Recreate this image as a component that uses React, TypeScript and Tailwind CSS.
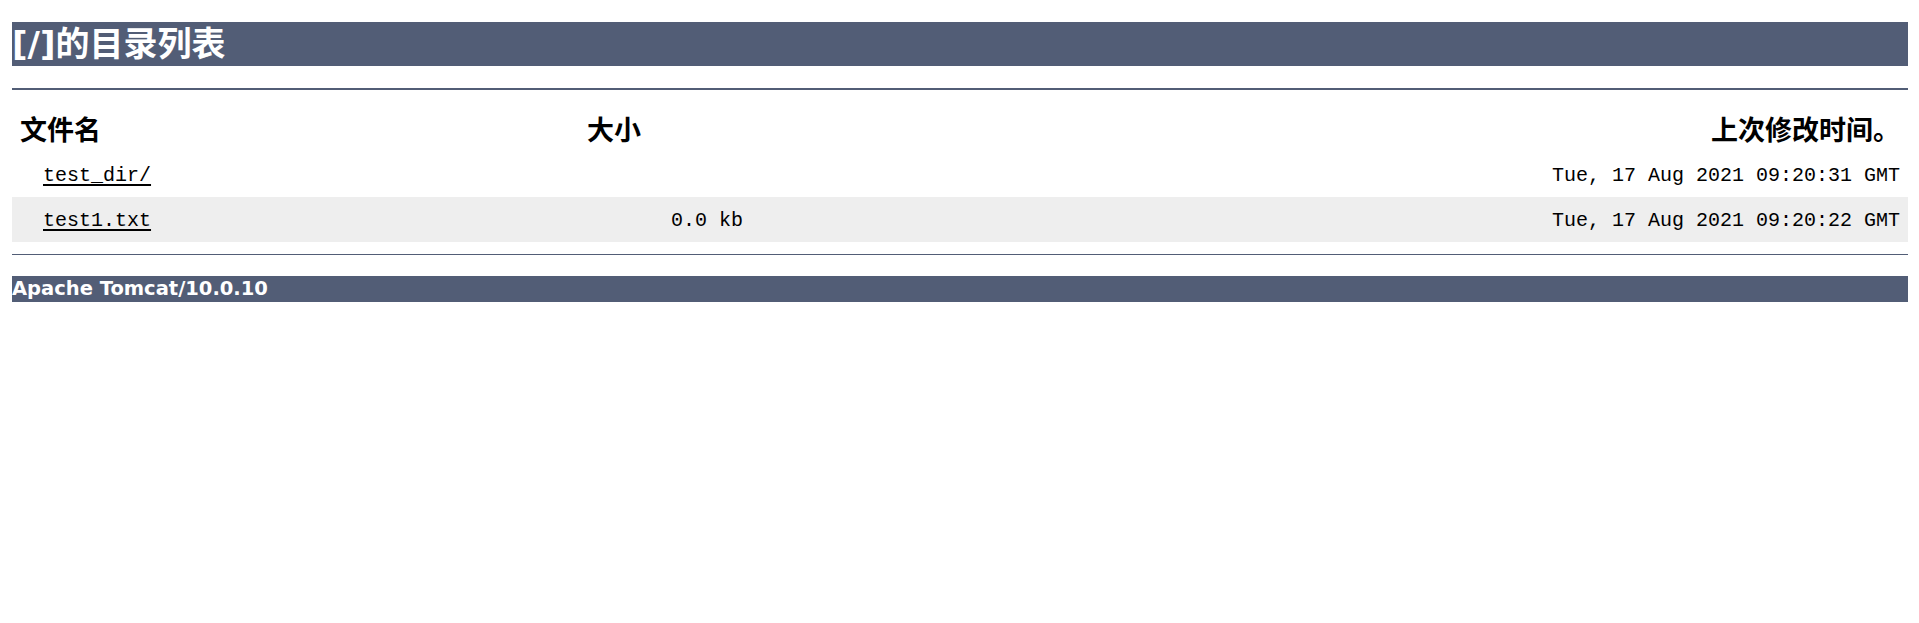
const rows = [
  { name: "test_dir/", size: "", modified: "Tue, 17 Aug 2021 09:20:31 GMT" },
  { name: "test1.txt", size: "0.0 kb", modified: "Tue, 17 Aug 2021 09:20:22 GMT" },
]

const mono = "font-['Liberation_Mono','DejaVu_Sans_Mono',monospace] text-[20px]"
const heading = "font-['Noto_Sans_CJK_SC',sans-serif] text-[27px] font-bold leading-none"

export default function App() {
  return (
    <div className="min-h-[623px] bg-white pl-[12px] pr-[11px] text-black font-['DejaVu_Sans','Noto_Sans_CJK_SC',sans-serif]">
      <div className="h-[22px]" />
      <h1 className="flex h-[44px] items-center bg-[#525D76] text-[34px] font-bold leading-none text-white">
        [/]的目录列表
      </h1>
      <div className="mt-[22px] h-[2px] bg-[#525D76]" />

      <div className="mt-[12px]">
        <div className="grid h-[50px] grid-cols-[465px_274px_1fr] items-center pt-[2px]">
          <div className={`pl-[8px] ${heading}`}>文件名</div>
          <div className={`text-center ${heading}`}>大小</div>
          <div className={`pr-[8px] text-right ${heading}`}>上次修改时间。</div>
        </div>
        {rows.map((row, i) => (
          <div
            key={row.name}
            className={`grid h-[45px] grid-cols-[465px_274px_1fr] items-center pt-[3px] ${i % 2 === 1 ? "bg-[#eeeeee]" : "bg-white"}`}
          >
            <div className="pl-[31px]">
              <a href="#" className={`text-black underline underline-offset-[3px] ${mono}`}>
                {row.name}
              </a>
            </div>
            <div className={`pr-[8px] text-right ${mono}`}>{row.size}</div>
            <div className={`pr-[8px] text-right ${mono}`}>{row.modified}</div>
          </div>
        ))}
      </div>

      <div className="mt-[12px] h-px bg-[#525D76]" />
      <h3 className="mt-[21px] flex h-[26px] items-center bg-[#525D76] font-['DejaVu_Sans',sans-serif] text-[19.5px] font-bold leading-none text-white">
        Apache Tomcat/10.0.10
      </h3>
    </div>
  )
}
